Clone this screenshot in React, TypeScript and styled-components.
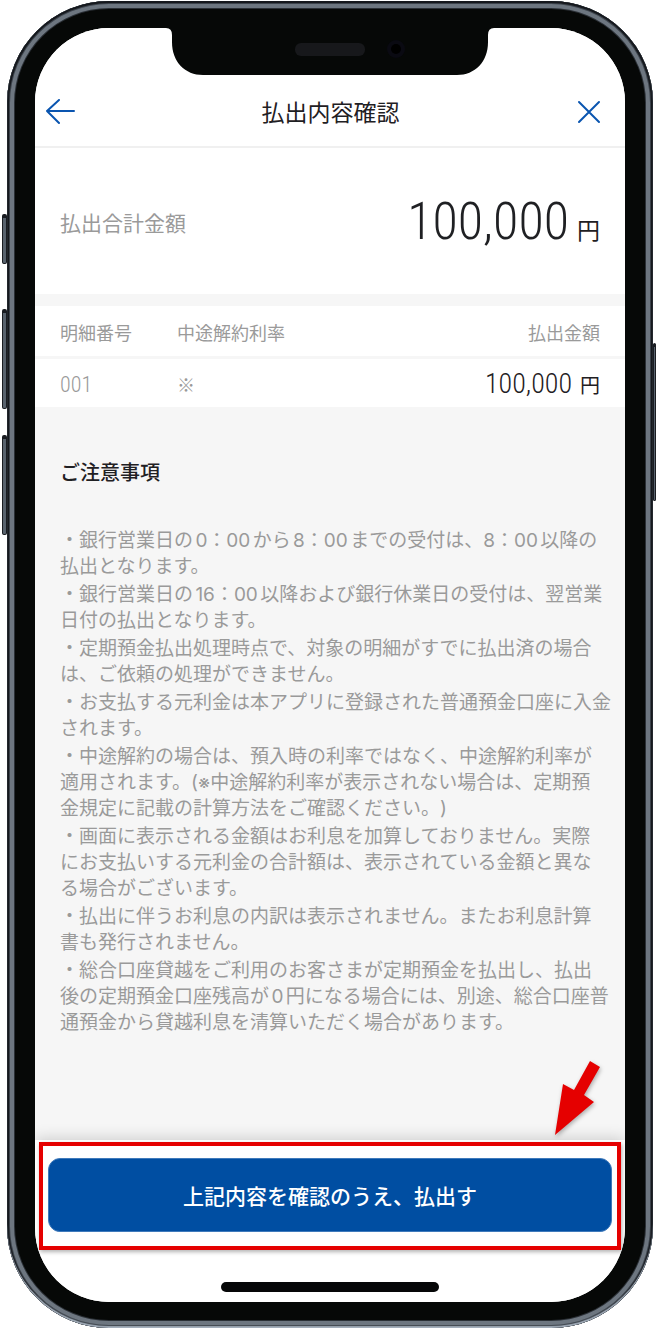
import React from "react";
import styled, { createGlobalStyle } from "styled-components";

const INK = "#1f2023";
const MUTED = "#9a9a9a";
const SURFACE = "#f6f6f6";
const BLUE = "#004ea2";
const RED = "#e50000";

const GlobalStyle = createGlobalStyle`
  *, *::before, *::after { box-sizing: border-box; }
  body {
    margin: 0;
    background: #fff;
    color: ${INK};
    font-family: Inter, "Noto Sans CJK JP", sans-serif;
  }
`;

const Page = styled.div`
  padding: 1px 4px 1px 7px;
`;

const Phone = styled.div`
  position: relative;
  padding: 27px 28px 26px;
  border-radius: 102px;
  background: #060807;
  box-shadow:
    inset 0 -2px 1px #a3aebb,
    inset 0 0 0 2px #15181d,
    inset 0 0 0 3px #3c434b,
    inset 0 0 0 7px #6d7680,
    inset 0 0 0 8px #2b3036;
`;

const SideKey = styled.span<{ $side: "left" | "right"; $top: number; $length: number }>`
  position: absolute;
  ${(p) => p.$side}: -${(p) => (p.$side === "left" ? 5 : 3)}px;
  top: ${(p) => p.$top}px;
  width: ${(p) => (p.$side === "left" ? 5 : 3)}px;
  height: ${(p) => p.$length}px;
  border: solid #1a1d22;
  border-width: 4px 1px 1px;
  border-radius: 2px;
  background: #59636e;
`;

const Screen = styled.main`
  display: flex;
  flex-direction: column;
  overflow: hidden;
  border-radius: 74px;
  background: ${SURFACE};
`;

const NotchBar = styled.div`
  display: flex;
  justify-content: center;
  background: #fff;
  svg { display: block; }
`;

const Header = styled.header`
  display: flex;
  align-items: center;
  justify-content: space-between;
  height: 73px;
  padding: 2px 24px 0 10px;
  border-bottom: 2px solid #f0f0f0;
  background: #fff;
`;

const Title = styled.h1`
  margin: 0;
  padding: 3px 0 0 9px;
  font-size: 23px;
  line-height: 32px;
  font-weight: 400;
`;

const IconButton = styled.button`
  display: flex;
  padding: 0;
  border: 0;
  background: none;
  color: #0a55b0;
  cursor: pointer;
`;

const Summary = styled.section`
  display: flex;
  align-items: center;
  justify-content: space-between;
  height: 146px;
  padding: 2px 25px 0;
  margin-bottom: 12px;
  background: #fff;
`;

const SummaryLabel = styled.h2`
  margin: 0;
  color: ${MUTED};
  font-size: 21px;
  font-weight: 400;
`;

const Figure = styled.span<{ $size: number }>`
  font-family: "Roboto Condensed", "Liberation Sans Narrow", Roboto, sans-serif;
  font-size: ${(p) => p.$size}px;
  line-height: 1;
  font-weight: 300;
`;

const Amount = styled.span<{ $unit: number }>`
  display: inline-flex;
  align-items: baseline;
  gap: 8px;
  color: ${INK};
  font-size: ${(p) => p.$unit}px;
  line-height: 1;
`;

const Details = styled.table`
  width: 100%;
  border-collapse: collapse;
  table-layout: fixed;
  background: #fff;
  color: ${MUTED};
  font-family: "Noto Sans CJK JP", sans-serif;
  font-size: 18px;
  line-height: 27px;

  th, td {
    padding: 3px 0 0;
    font-weight: 400;
    text-align: left;
  }
  th { height: 51px; }
  td { height: 50px; }
  th:first-child, td:first-child { width: 142px; padding-left: 25px; }
  th:last-child, td:last-child { padding-right: 25px; text-align: right; }
  thead { border-bottom: 3px solid ${SURFACE}; }
`;

const Notice = styled.section`
  padding: 51px 12px 104px 25px;
`;

const NoticeTitle = styled.h2`
  margin: 0 0 40px;
  font-size: 20px;
  line-height: 30px;
  font-weight: 500;
`;

const NoticeList = styled.ul`
  display: flex;
  flex-direction: column;
  gap: 2px;
  margin: 0;
  padding: 0;
  list-style: none;
  color: ${MUTED};
  font-size: 19px;
  line-height: 26px;
  text-autospace: normal;
  text-spacing-trim: space-all;
`;

const Footer = styled.footer`
  position: relative;
  display: flex;
  flex-direction: column;
  gap: 32px;
  padding: 2px 4px 10px;
  background: #fff;
  box-shadow: 0 -2px 14px rgba(0, 0, 0, 0.16);
`;

const Highlight = styled.div`
  position: relative;
  padding: 12px 5px 14px;
  border: 4px solid ${RED};
  box-shadow: 1px 2px 4px rgba(0, 0, 0, 0.3);
`;

const Pointer = styled.svg`
  position: absolute;
  right: 9px;
  bottom: 110px;
  overflow: visible;
  filter: drop-shadow(1px 2px 2px rgba(0, 0, 0, 0.3));
`;

const SubmitButton = styled.button`
  display: block;
  width: 100%;
  height: 74px;
  padding: 0;
  border: 1px solid #3f7abb;
  border-radius: 12px;
  background: ${BLUE};
  color: #fff;
  font-family: inherit;
  font-size: 21px;
  font-weight: 500;
  cursor: pointer;
`;

const HomeIndicator = styled.div`
  align-self: center;
  width: 218px;
  height: 10px;
  border-radius: 5px;
  background: #060708;
`;

const notices: string[][] = [
  ["・銀行営業日の0：00から8：00までの受付は、8：00以降の", "払出となります。"],
  ["・銀行営業日の16：00以降および銀行休業日の受付は、翌営業", "日付の払出となります。"],
  ["・定期預金払出処理時点で、対象の明細がすでに払出済の場合", "は、ご依頼の処理ができません。"],
  ["・お支払する元利金は本アプリに登録された普通預金口座に入金", "されます。"],
  [
    "・中途解約の場合は、預入時の利率ではなく、中途解約利率が",
    "適用されます。(※中途解約利率が表示されない場合は、定期預",
    "金規定に記載の計算方法をご確認ください。)",
  ],
  [
    "・画面に表示される金額はお利息を加算しておりません。実際",
    "にお支払いする元利金の合計額は、表示されている金額と異な",
    "る場合がございます。",
  ],
  ["・払出に伴うお利息の内訳は表示されません。またお利息計算", "書も発行されません。"],
  [
    "・総合口座貸越をご利用のお客さまが定期預金を払出し、払出",
    "後の定期預金口座残高が0円になる場合には、別途、総合口座普",
    "通預金から貸越利息を清算いただく場合があります。",
  ],
];

function Notch() {
  return (
    <svg width="328" height="47" viewBox="0 0 328 47" aria-hidden="true">
      <path
        d="M0 0H328Q322 0 322 7V14C322 34 309 47 291 47H37C19 47 6 34 6 14V7Q6 0 0 0Z"
        fill="#060807"
      />
      <rect x="129" y="15" width="70" height="13" rx="6" fill="#17181b" />
      <circle cx="230" cy="21" r="9" fill="#0a0a12" />
      <circle cx="230" cy="21" r="5" fill="#000" />
    </svg>
  );
}

export default function App() {
  return (
    <>
      <GlobalStyle />
      <Page>
        <Phone>
          <SideKey $side="left" $top={213} $length={50} />
          <SideKey $side="left" $top={308} $length={100} />
          <SideKey $side="left" $top={434} $length={100} />
          <SideKey $side="right" $top={342} $length={158} />
          <Screen>
            <NotchBar>
              <Notch />
            </NotchBar>
            <Header>
              <IconButton type="button" aria-label="戻る">
                <svg width="30" height="26" viewBox="0 0 30 26" fill="none" stroke="currentColor" strokeWidth="2">
                  <path d="M14 1L2 12L14 24M2 12H29" strokeLinecap="round" strokeLinejoin="round" />
                </svg>
              </IconButton>
              <Title>払出内容確認</Title>
              <IconButton type="button" aria-label="閉じる">
                <svg width="24" height="24" viewBox="0 0 24 24" fill="none" stroke="currentColor" strokeWidth="2">
                  <path d="M2 2L22 22M22 2L2 22" strokeLinecap="round" />
                </svg>
              </IconButton>
            </Header>

            <Summary>
              <SummaryLabel>払出合計金額</SummaryLabel>
              <Amount $unit={23}>
                <Figure $size={52}>100,000</Figure>円
              </Amount>
            </Summary>

            <Details>
              <thead>
                <tr>
                  <th scope="col">明細番号</th>
                  <th scope="col">中途解約利率</th>
                  <th scope="col">払出金額</th>
                </tr>
              </thead>
              <tbody>
                <tr>
                  <td>
                    <Figure $size={22}>001</Figure>
                  </td>
                  <td>※</td>
                  <td>
                    <Amount $unit={20}>
                      <Figure $size={28}>100,000</Figure>円
                    </Amount>
                  </td>
                </tr>
              </tbody>
            </Details>

            <Notice>
              <NoticeTitle>ご注意事項</NoticeTitle>
              <NoticeList>
                {notices.map((lines) => (
                  <li key={lines[0]}>
                    {lines.map((line, i) => (
                      <React.Fragment key={line}>
                        {i > 0 && <br />}
                        {line}
                      </React.Fragment>
                    ))}
                  </li>
                ))}
              </NoticeList>
            </Notice>

            <Footer>
              <Highlight>
                <SubmitButton type="button">上記内容を確認のうえ、払出す</SubmitButton>
                <Pointer width="54" height="76" viewBox="0 0 54 76" aria-hidden="true">
                  <path d="M1 75L9 24L20 30L36 1L46 7L30 35L40 42Z" fill={RED} />
                </Pointer>
              </Highlight>
              <HomeIndicator />
            </Footer>
          </Screen>
        </Phone>
      </Page>
    </>
  );
}
